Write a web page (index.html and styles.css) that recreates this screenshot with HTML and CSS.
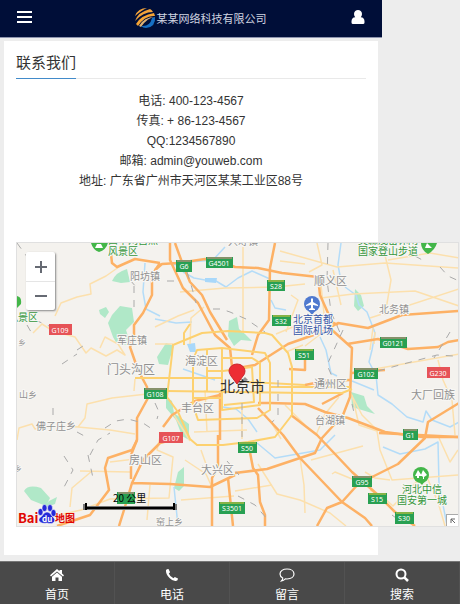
FILE: index.html
```html
<!DOCTYPE html>
<html lang="zh-CN">
<head>
<meta charset="utf-8">
<meta name="viewport" content="width=device-width, initial-scale=1">
<title>联系我们</title>
<link rel="stylesheet" href="styles.css">
</head>
<body>
<div class="page">
  <header class="topbar">
    <button class="icon-button" type="button" aria-label="菜单">
      <svg width="16" height="14" viewBox="0 0 16 14"><path fill="#fff" d="M0 1h15v2H0zM0 6h15v2H0zM0 11h15v2H0z"/></svg>
    </button>
    <a class="brand" href="#">
      <svg width="22" height="22" viewBox="0 0 22 22" fill="none">
        <path d="M1 9Q4 1 13 1Q8 3 1 9Z" fill="#f2a33b"/>
        <path d="M1 14Q4 5 16 2Q18 3 19 5Q9 5 1 14Z" fill="#f2a33b"/>
        <path d="M2 17Q7 8 20 6L21 9Q11 8 4 19Z" fill="#f5a435"/>
        <path d="M5 19Q10 10 21 10Q14 10 7 20Z" fill="#ddb277"/>
        <path d="M21 10Q22 20 12 21Q9 21 7 19Q16 20 18 11Z" fill="#1670c4"/>
      </svg>
      <span>某某网络科技有限公司</span>
    </a>
    <a class="icon-button" href="#" aria-label="会员">
      <svg width="14" height="16" viewBox="0 0 14 16"><path fill="#fff" d="M7 1C9 1 11 2.500 11 5Q11 7 9.800 8.300Q13.500 8.500 13.500 12.500V13.500Q13.500 15 12 15H2Q.5 15 .5 13.500V12.500Q.5 8.500 4.200 8.300Q3 7 3 5C3 2.500 5 1 7 1Z"/></svg>
    </a>
  </header>

  <main class="panel">
    <div class="panel-head"><h1>联系我们</h1></div>
    <address class="contact">
      <p>电话: 400-123-4567</p>
      <p>传真: + 86-123-4567</p>
      <p>QQ:1234567890</p>
      <p>邮箱: admin@youweb.com</p>
      <p>地址: 广东省广州市天河区某某工业区88号</p>
    </address>

    <div class="map">
      <svg class="map-canvas" viewBox="17 243 441 283" role="img" aria-label="北京市地图">
        <rect x="17" y="243" width="442" height="284" fill="#f4f2ee"/>
        <g class="green">
          <path d="M112 281Q116 272 127 269L130 282L121 283Z"/>
          <path d="M99 310L106 307L109 312L105 318L100 314ZM112 315L120 306L132 308L134 322L126 330L131 345L117 344L113 337L108 323Z"/>
          <path d="M157 357L166 343L174 346L170 358L168 365L159 364Z"/>
          <path d="M229 321L237 317L239 329L245 334L252 341L241 340L234 346L228 336Z"/>
          <path d="M355 289L361 295L364 306L358 311L354 306ZM351 392L364 396L367 406L375 414L352 407Z"/>
          <path d="M166 397L172 401L174 413L189 424L189 440L182 436L176 420L166 408Z"/>
          <path d="M178 472L184 467L184 486L179 491L174 488ZM24 491Q28 484 41 488L50 498L46 506L31 500ZM49 501L57 497L55 504L44 508Z"/>
        </g>
        <g class="water">
          <path d="M145 263L143 292L146 309L160 316M173 265L190 262L213 260L225 247M183 272L194 278L205 280L216 281L226 287L238 278L252 271L270 279M271 300L275 308L286 310M341 243L338 265L341 281M345 287L356 295L359 305L367 312L372 325L375 333L372 350L369 362L376 375L378 395L392 404L407 417L423 422L426 411L432 420L450 427L459 422M320 337L326 350L331 373L337 376M352 381L374 390M183 369L215 380M223 407L236 409L248 419L257 432M155 319L176 323L192 322M335 435L320 450L275 458L257 443M383 447L400 454L425 449L438 442L439 485L447 525M174 487L178 526"/>
          <path class="lake" d="M187 344L195 343L196 352L190 352ZM205 278L217 278L216 283L205 282Z"/>
        </g>
        <g class="pale">
          <path d="M55 316L61 303L77 297L91 294L90 284L106 276L123 264"/>
          <path d="M33 333L42 324L53 331L75 337L86 353L91 348L106 356L117 350L125 355L118 344L105 337L100 348M17 440L19 428L32 424L35 429L46 427L65 426L78 427L85 418L87 404L112 398L147 394M78 427L110 430L135 434"/>
          <path d="M135 379L134 391M243 243L243 333M180 292L225 288L276 287L305 284M280 251L337 267L385 263L459 268M317 243L322 265L309 272M382 243L391 280L385 315M388 260L430 253L459 258M280 261L305 264M321 298L353 294L415 291L459 306M321 285L325 323M333 270L341 305M370 318L459 289M373 328L370 350M375 332L374 344"/>
          <path d="M339 397L325 414L316 435M305 346L322 333M352 395L359 425L377 431L380 450L392 480L459 475M352 373L459 354M438 360L443 380L452 400L455 435M439 438L450 462L458 450M350 392L362 415L378 431M357 481L335 472L332 474M365 472L375 478L390 480M370 490L384 498L393 506L425 473L438 502L445 526M300 458L304 485L305 513M258 464L277 494L300 500L330 513L346 526M235 491L272 485M311 460L363 446"/>
          <path d="M80 471L130 472M110 462L135 459L146 462M160 437L157 450L173 457L169 498L110 499L81 510L59 515M92 471L72 488L70 507M150 485L147 520M181 500L234 496M185 460L206 474L211 485M201 450L207 467"/>
          <path d="M155 327L178 316L194 310M155 344L173 344M190 344L191 318L204 307M276 334L305 322M286 332L298 300L291 295M303 345L286 352M285 405L305 425M270 420L281 439M242 410L242 439M174 415L190 441M205 390L207 432M194 432L247 430"/>
        </g>
        <g class="orange">
          <path d="M110 245L112 263L117 267L135 259L160 263M155 270L162 264L178 263L205 259L220 261L235 267L258 268L282 273L318 277L320 295L332 322L338 325"/>
          <path d="M160 263L152 275V295L143 313L134 325V337L130 347L138 370L147 387L148 398L137 418V440L132 450L108 458L105 468L109 490L90 515L75 520L57 526"/>
          <path d="M175 439L160 443L143 460L132 483L170 484L210 487L235 475M137 440L131 455V479M132 483L124 510L119 526"/>
          <path d="M170 243V260L183 288L198 303L215 335L230 348L232 367M175 243L183 265L190 282L202 295L210 312L227 340"/>
          <path d="M275 243L270 268L269 320L258 335L252 355M459 311L402 315L368 328L338 323L322 332L288 344L255 365L238 368"/>
          <path d="M332 330L352 348L350 397L343 415L322 438L315 453L300 458L267 469L235 473M347 344L378 339L408 349L438 347L448 342L459 340"/>
          <path d="M258 403L270 403L305 404L325 412L348 418L385 432L422 437H459M459 403L428 422L425 438L398 464L372 477L360 482L342 502L327 508L317 526"/>
          <path d="M258 408L283 435L300 458L342 502L365 518L372 526M291 415L317 435L352 472L378 495L395 512L415 526M248 442L253 468L258 475L260 502L265 515V526"/>
          <path d="M218 435V467L212 478V526M228 478L233 526M220 393V440M163 427L172 415L195 401L220 395M305 385L325 381L350 380M289 369L305 370V353M352 373L369 371L385 370M343 393L322 404M379 433L459 437"/>
        </g>
        <g class="yellow">
          <path d="M173 345L202 333L228 331L265 333L272 335L288 353L292 367V415L275 437L248 442L223 445L197 445L190 439L178 412L167 397L171 363Z"/>
          <path d="M197 350L222 348L265 353L270 363V410L257 418L198 420L193 405V360Z"/>
          <path d="M222 358H252L260 363V405L222 410ZM206 371H223L252 367L254 402L224 405"/>
          <path d="M135 378H223M247 382L305 385M167 391L305 393H342L352 389M207 350V391M193 398H223M184 345V333L190 324M222 348V394M270 387H350"/>
        </g>
        <g class="rail">
          <path d="M17 243L28 258M27 325L34 337M35 320L49 326M62 364L77 354M77 350L86 344M130 280L137 288M134 286V314M167 281H177M187 272L192 288L196 303M213 309H221L230 312L246 319L265 332M328 243L327 280L331 312L341 335M415 256L426 262M440 267L448 276L459 281M343 330L327 365L334 381M378 371L396 366L437 355L453 356M450 332L444 342L434 358M278 380L278 417L272 422M242 403V437M155 403L159 412L157 419M53 408V415M77 432L88 438M105 428L116 421L128 419L143 423L155 431M64 456L73 470L62 491M88 455L93 478M90 455L98 440L110 433M238 496L255 505L268 520M352 404L355 417M392 515L400 521M202 466L213 473M227 461L239 475"/>
        </g>
        <g class="pins">
          <path fill="#43b649" d="M91 243H108Q106 250 99 252Q93 250 91 243ZM17 296Q22 297 21 304L17 308Z"/>
          <path fill="#43b649" d="M421 243H437Q435 250 428 254Q421 250 421 243Z"/>
          <path fill="#fff" d="M97 244H101L103 248H95ZM427 243L432 248H425Z"/>
          <circle cx="312" cy="304" r="8" fill="#4f79cf"/><path fill="#4f79cf" d="M308 310L312 315L316 310Z"/>
          <path fill="#fff" d="M311 299L312 298L313 299V302L318 305V306L313 305V308L315 309V310H309V309L311 308V305L306 306V305L311 302Z"/>
          <circle cx="421" cy="475" r="8" fill="#43b649"/><path fill="#43b649" d="M418 481H425L422 485Z"/>
          <path fill="#fff" d="M418 470L422 476H419V478H417V476H415ZM423 470L427 475L424 477V479H423V477L421 475Z"/>
        </g>
        <g class="shield">
          <g class="g"><rect x="176" y="260" width="16" height="12"/><rect x="206" y="257" width="27" height="11"/><rect x="144" y="388" width="23" height="11"/><rect x="380" y="337" width="27" height="11"/><rect x="354" y="368" width="24" height="11"/><rect x="403" y="429" width="15" height="11"/><rect x="352" y="476" width="20" height="11"/></g>
          <g class="s"><rect x="267" y="280" width="18" height="11"/><rect x="272" y="315" width="19" height="11"/><rect x="295" y="349" width="19" height="11"/><rect x="238" y="442" width="19" height="11"/><rect x="368" y="493" width="19" height="11"/><rect x="395" y="512" width="19" height="12"/><rect x="219" y="502" width="26" height="12"/><rect x="117" y="492" width="18" height="12"/></g>
          <g class="r"><rect x="49" y="324" width="23" height="11"/><rect x="427" y="367" width="23" height="11"/><rect x="159" y="432" width="24" height="11"/></g>
          <path stroke="#e58383" d="M177 261H191M207 258H232M145 389H166M381 338H406M355 369H377M404 430H417M353 477H371M118 493H134"/>
          <path stroke="#e5c63b" d="M268 281H284M273 316H290M296 350H313M239 443H256M369 494H386M396 513H413M220 503H244"/>
          <g class="codes">
            <text x="184" y="269">G6</text><text x="219" y="266">G4501</text><text x="276" y="289">S28</text><text x="281" y="324">S32</text><text x="304" y="358">S51</text><text x="393" y="346">G0121</text><text x="366" y="377">G102</text><text x="438" y="376">G230</text><text x="60" y="333">G109</text><text x="155" y="397">G108</text><text x="171" y="441">G107</text><text x="410" y="438">G1</text><text x="247" y="451">S50</text><text x="362" y="485">G95</text><text x="377" y="502">S15</text><text x="404" y="521">S30</text><text x="232" y="511">S3501</text>
          </g>
        </g>
        <g class="town">
          <text x="130" y="280" font-size="10">阳坊镇</text><text x="228" y="245" font-size="10">兴寿镇</text><text x="314" y="285" font-size="11">顺义区</text><text x="379" y="313" font-size="10">北务镇</text><text x="117" y="344" font-size="10">军庄镇</text><text x="107" y="374" font-size="12">门头沟区</text><text x="185" y="365" font-size="11">海淀区</text><text x="314" y="388" font-size="11">通州区</text><text x="181" y="412" font-size="11">丰台区</text><text x="315" y="424" font-size="10">台湖镇</text><text x="411" y="399" font-size="11">大厂回族</text><text x="36" y="430" font-size="10">佛子庄乡</text><text x="19" y="398" font-size="9">山乡</text><text x="18" y="346" font-size="8">乡</text><text x="129" y="464" font-size="11">房山区</text><text x="201" y="474" font-size="11">大兴区</text><text x="156" y="525" font-size="9">窑上乡</text><text x="14" y="472" font-size="8">乡</text>
        </g>
        <g class="park">
          <text x="108" y="244" font-size="10">西平网自然</text><text x="108" y="255" font-size="10">风景区</text><text x="358" y="244" font-size="10">奥森茂密休闲</text><text x="358" y="255" font-size="10">国家登山步道</text><text x="8" y="321" font-size="10">风景区</text><text x="402" y="493" font-size="10">河北中信</text><text x="397" y="504" font-size="10">国安第一城</text>
        </g>
        <g class="airport"><text x="293" y="323" font-size="10">北京首都</text><text x="293" y="334" font-size="10">国际机场</text></g>
        <text class="city" x="220" y="392" font-size="15">北京市</text>
        <path d="M238 384L245 377L248 380L241 384Z" fill="#0006"/>
        <path d="M237 384L231 376Q229 373 229 371A8 7 0 0 1 245 371Q245 374 243 376Z" fill="#ed2d34" stroke="#c9252c"/>
        <path d="M85 504V510M175 504V510M85 508H175" stroke="#777" stroke-width="4" fill="none"/><path d="M86 503V510M174 503V510M86 508H174" stroke="#000" stroke-width="2" fill="none"/>
        <text class="scale" x="113" y="502" font-size="10">20 公里</text>
        <g class="provider">
          <text x="18" y="523" font-size="13" fill="#e10601">Bai</text>
          <g fill="#2529d8" stroke="#fff" stroke-width=".5"><ellipse cx="40.500" cy="512" rx="2.500" ry="3.500"/><ellipse cx="44.500" cy="508" rx="2.500" ry="3.500"/><ellipse cx="50" cy="508" rx="2.500" ry="3.500"/><ellipse cx="53.500" cy="513" rx="2.500" ry="3.500"/><path d="M47 512Q50 512 52 516Q57 520 53 523Q51 524 47 523Q42 524 40 522Q37 519 42 516Q44 512 47 512Z"/></g>
          <text x="42" y="522" font-size="8" fill="#fff">du</text><text x="55" y="522" font-size="10" fill="#e10601">地图</text>
        </g>
      </svg>
      <div class="zoom">
        <button type="button" aria-label="放大"><svg width="12" height="12" viewBox="0 0 12 12"><path fill="#666a73" d="M5 0h2v5h5v2H7v5H5V7H0V5h5z"/></svg></button>
        <button type="button" aria-label="缩小"><svg width="12" height="12" viewBox="0 0 12 12"><path fill="#666a73" d="M0 5h12v2H0z"/></svg></button>
      </div>
      <button class="overview" type="button" aria-label="展开鹰眼图"><svg width="6" height="6" viewBox="0 0 6 6"><path d="M5 1H1V5M1 1L5 5" fill="none" stroke="#666"/></svg></button>
    </div>
  </main>
</div>

<nav class="tabs">
  <a href="#"><svg width="14" height="14" viewBox="0 0 14 14"><path fill="#fff" d="M7 1L9.500 3.200V2H12V5.500L14 7.300L13 8.500L7 3.400L1 8.500L0 7.300ZM7 4.600L12 8.800V13H8.500V9.500H5.500V13H2V8.800Z"/></svg><span>首页</span></a>
  <a href="#"><svg width="14" height="14" viewBox="0 0 14 14"><path fill="#fff" d="M1 2Q2.500 .6 3.500 1L5 4Q5 4.500 3.800 5.500Q4.800 8.500 8.500 10.200L9.800 9L13 10.500Q13 12.500 11 13Q8 13.500 4.500 10Q.5 6 1 2Z"/></svg><span>电话</span></a>
  <a href="#"><svg width="16" height="14" viewBox="0 0 16 14"><path fill="none" stroke="#fff" stroke-width="1.200" d="M8 1C12 1 15 3 15 6S12 11 8 11L6.300 10.800Q4.500 12.700 2.500 13Q4 11.500 3.700 10Q1 8.500 1 6C1 3 4 1 8 1Z"/></svg><span>留言</span></a>
  <a href="#"><svg width="14" height="14" viewBox="0 0 14 14"><g fill="none" stroke="#fff" stroke-width="2"><circle cx="6" cy="6" r="4.500"/><path stroke-width="2.500" d="M9.300 9.300L13 13"/></g></svg><span>搜索</span></a>
</nav>
</body>
</html>
```
FILE: styles.css
```css
* { box-sizing: border-box; }

body {
  margin: 0;
  min-height: 100vh;
  display: flex;
  flex-direction: column;
  overflow-x: hidden;
  background: #ededed;
  color: #333;
  font: 12px/20px "Noto Sans CJK SC", sans-serif;
}

a { color: inherit; text-decoration: none; }
svg { display: block; }
button { padding: 0; border: 0; background: none; }

.page { margin-right: 78px; }

.topbar {
  display: flex;
  align-items: center;
  justify-content: space-between;
  height: 38px;
  padding: 0 17px 3px;
  border-bottom: 1px solid #8e94ae;
  background: #000e38;
}
.icon-button { display: flex; }
.brand {
  display: flex;
  align-items: center;
  gap: 1px;
  margin-top: 2px;
  padding-left: 16px;
  color: #d0d4e0;
  font-size: 11px;
}

.panel {
  margin: 3px 4px 6px;
  padding: 11px 12px 28px;
  background: #fff;
}
.panel-head {
  display: flex;
  border-bottom: 1px solid #e9e9e9;
}
.panel-head h1 {
  margin: 0 0 -1px;
  padding-bottom: 6px;
  border-bottom: 1px solid #428bca;
  font-size: 15px;
  line-height: 20px;
  font-weight: 400;
}
.contact {
  margin: 12px 0 51px;
  text-align: center;
  font-family: "Liberation Sans", "Noto Sans CJK SC", sans-serif;
  font-style: normal;
}
.contact p { margin: 0; }

.map {
  position: relative;
  margin-right: -93px;
  border: 1px solid #e0e0e0;
}
.map-canvas { width: 100%; height: auto; overflow: hidden; }
.green { fill: #b0e8c8; }
.water, .pale, .orange, .yellow, .rail {
  fill: none;
  stroke-linejoin: round;
}
.water { stroke: #b4dcf8; stroke-width: 1.5; }
.lake { fill: #a9d8fa; stroke: none; }
.pale { stroke: #fce0ad; stroke-width: 1.5; }
.orange { stroke: #fdb165; stroke-width: 2.5; }
.yellow { stroke: #fdd16f; stroke-width: 2; }
.rail { stroke: #aaa; stroke-width: 1; stroke-dasharray: 7 7; }
.shield .g, .shield .s { fill: #28a052; }
.shield .r { fill: #e65357; }
.codes {
  fill: #fff;
  font: 7px "Noto Sans", sans-serif;
  text-anchor: middle;
}
.town, .park, .airport {
  stroke: #f8f7f4;
  stroke-width: 2;
  paint-order: stroke;
}
.town { fill: #919191; }
.park { fill: #35963c; }
.airport { fill: #3555a8; }
.city { fill: #333; }
.scale { fill: #000; }
.provider { font-family: "Noto Sans CJK SC", sans-serif; font-weight: 700; }

.zoom {
  position: absolute;
  top: 9px;
  left: 9px;
  display: grid;
  width: 29px;
  border-radius: 2px;
  background: #fff;
  box-shadow: 1px 1px 2px #888;
}
.zoom button {
  display: grid;
  place-items: center;
  height: 29px;
}
.zoom button + button { border-top: 1px solid #e5e5e5; }
.overview {
  position: absolute;
  right: 0;
  bottom: 0;
  display: grid;
  place-items: center;
  width: 12px;
  height: 12px;
  border: solid #aaa;
  border-width: 1px 0 0 1px;
  background: #fff;
}

.tabs {
  display: grid;
  grid-template-columns: repeat(4, 1fr);
  margin-top: auto;
  border-top: 1px solid #777;
  background: #494949;
  color: #fff;
}
.tabs a {
  display: flex;
  flex-direction: column;
  align-items: center;
  padding: 6px 0 0;
  gap: 2px;
  border-right: 1px solid #525252;
}
```
